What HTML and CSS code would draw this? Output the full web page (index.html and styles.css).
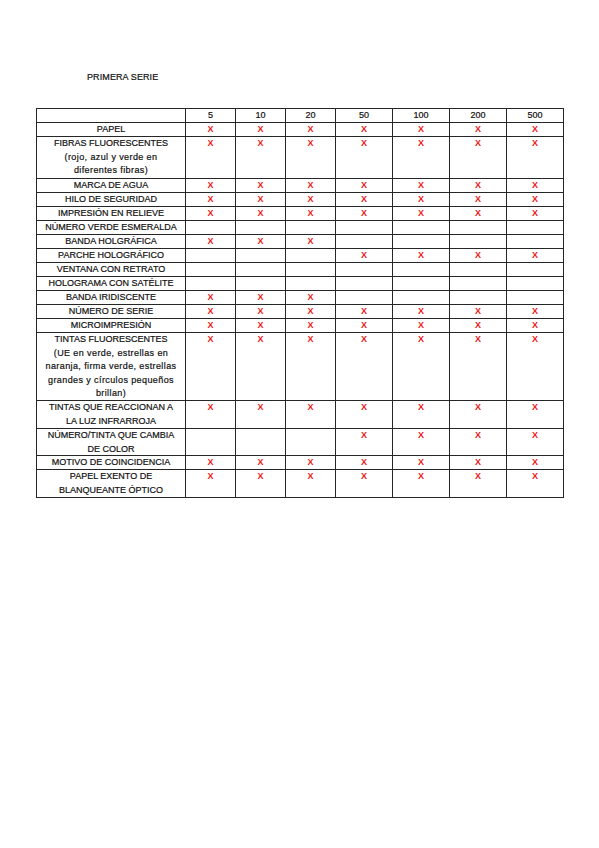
FILE: index.html
```html
<!DOCTYPE html>
<html lang="es">
<head>
<meta charset="utf-8">
<title>Primera serie</title>
<link rel="stylesheet" href="styles.css">
</head>
<body>
<div class="page">
  <h1 class="title">PRIMERA SERIE</h1>
  <div class="grid">
    <div class="c h1"></div><div class="c n">5</div><div class="c n">10</div><div class="c n">20</div><div class="c n">50</div><div class="c n">100</div><div class="c n">200</div><div class="c n">500</div>

    <div class="c f h1">PAPEL</div><div class="c x">X</div><div class="c x">X</div><div class="c x">X</div><div class="c x">X</div><div class="c x">X</div><div class="c x">X</div><div class="c x">X</div>

    <div class="c f h3">FIBRAS FLUORESCENTES<br><span class="lc">(rojo, azul y verde en</span><br><span class="lc">diferentes fibras)</span></div><div class="c x">X</div><div class="c x">X</div><div class="c x">X</div><div class="c x">X</div><div class="c x">X</div><div class="c x">X</div><div class="c x">X</div>

    <div class="c f h1">MARCA DE AGUA</div><div class="c x">X</div><div class="c x">X</div><div class="c x">X</div><div class="c x">X</div><div class="c x">X</div><div class="c x">X</div><div class="c x">X</div>

    <div class="c f h1">HILO DE SEGURIDAD</div><div class="c x">X</div><div class="c x">X</div><div class="c x">X</div><div class="c x">X</div><div class="c x">X</div><div class="c x">X</div><div class="c x">X</div>

    <div class="c f h1">IMPRESIÓN EN RELIEVE</div><div class="c x">X</div><div class="c x">X</div><div class="c x">X</div><div class="c x">X</div><div class="c x">X</div><div class="c x">X</div><div class="c x">X</div>

    <div class="c f h1">NÚMERO VERDE ESMERALDA</div><div class="c"></div><div class="c"></div><div class="c"></div><div class="c"></div><div class="c"></div><div class="c"></div><div class="c"></div>

    <div class="c f h1">BANDA HOLGRÁFICA</div><div class="c x">X</div><div class="c x">X</div><div class="c x">X</div><div class="c"></div><div class="c"></div><div class="c"></div><div class="c"></div>

    <div class="c f h1">PARCHE HOLOGRÁFICO</div><div class="c"></div><div class="c"></div><div class="c"></div><div class="c x">X</div><div class="c x">X</div><div class="c x">X</div><div class="c x">X</div>

    <div class="c f h1">VENTANA CON RETRATO</div><div class="c"></div><div class="c"></div><div class="c"></div><div class="c"></div><div class="c"></div><div class="c"></div><div class="c"></div>

    <div class="c f h1">HOLOGRAMA CON SATÉLITE</div><div class="c"></div><div class="c"></div><div class="c"></div><div class="c"></div><div class="c"></div><div class="c"></div><div class="c"></div>

    <div class="c f h1">BANDA IRIDISCENTE</div><div class="c x">X</div><div class="c x">X</div><div class="c x">X</div><div class="c"></div><div class="c"></div><div class="c"></div><div class="c"></div>

    <div class="c f h1">NÚMERO DE SERIE</div><div class="c x">X</div><div class="c x">X</div><div class="c x">X</div><div class="c x">X</div><div class="c x">X</div><div class="c x">X</div><div class="c x">X</div>

    <div class="c f h1">MICROIMPRESIÓN</div><div class="c x">X</div><div class="c x">X</div><div class="c x">X</div><div class="c x">X</div><div class="c x">X</div><div class="c x">X</div><div class="c x">X</div>

    <div class="c f h5">TINTAS FLUORESCENTES<br><span class="lc">(UE en verde, estrellas en</span><br><span class="lc">naranja, firma verde, estrellas</span><br><span class="lc">grandes y círculos pequeños</span><br><span class="lc">brillan)</span></div><div class="c x">X</div><div class="c x">X</div><div class="c x">X</div><div class="c x">X</div><div class="c x">X</div><div class="c x">X</div><div class="c x">X</div>

    <div class="c f h2">TINTAS QUE REACCIONAN A<br>LA LUZ INFRARROJA</div><div class="c x">X</div><div class="c x">X</div><div class="c x">X</div><div class="c x">X</div><div class="c x">X</div><div class="c x">X</div><div class="c x">X</div>

    <div class="c f h2b">NÚMERO/TINTA QUE CAMBIA<br>DE COLOR</div><div class="c"></div><div class="c"></div><div class="c"></div><div class="c x">X</div><div class="c x">X</div><div class="c x">X</div><div class="c x">X</div>

    <div class="c f h1">MOTIVO DE COINCIDENCIA</div><div class="c x">X</div><div class="c x">X</div><div class="c x">X</div><div class="c x">X</div><div class="c x">X</div><div class="c x">X</div><div class="c x">X</div>

    <div class="c f h2">PAPEL EXENTO DE<br>BLANQUEANTE ÓPTICO</div><div class="c x">X</div><div class="c x">X</div><div class="c x">X</div><div class="c x">X</div><div class="c x">X</div><div class="c x">X</div><div class="c x">X</div>
  </div>
</div>
</body>
</html>
```

FILE: styles.css
```css
html, body {
  margin: 0;
  padding: 0;
  background: #ffffff;
}

body {
  font-family: "Liberation Sans", Arial, sans-serif;
  color: #111111;
}

.page {
  padding: 71px 0 0 36px;
}

.title {
  margin: 0 0 25px 51px;
  font-size: 9px;
  font-weight: normal;
  line-height: 12px;
  letter-spacing: 0.1px;
  -webkit-text-stroke: 0.2px #111111;
}

.grid {
  display: grid;
  width: 528px;
  box-sizing: border-box;
  grid-template-columns: 148px 49px 49px 49px 56px 56px 56px 56px;
  gap: 1px;
  padding: 1px;
  background: #262626;
}

.c {
  background: #ffffff;
  font-size: 9px;
  line-height: 13px;
  text-align: center;
  white-space: nowrap;
  overflow: hidden;
  -webkit-text-stroke: 0.2px #111111;
}

.f {
  line-height: 13.6px;
}

.h1 { height: 13px; }
.h2 { height: 27px; }
.h2b { height: 26px; }
.h3 { height: 41px; }
.h5 { height: 67px; }

.lc {
  letter-spacing: 0.4px;
}

.n {
  font-size: 9px;
}

.x {
  color: #f01515;
  font-weight: bold;
  font-size: 9px;
  -webkit-text-stroke: 0;
}
```
